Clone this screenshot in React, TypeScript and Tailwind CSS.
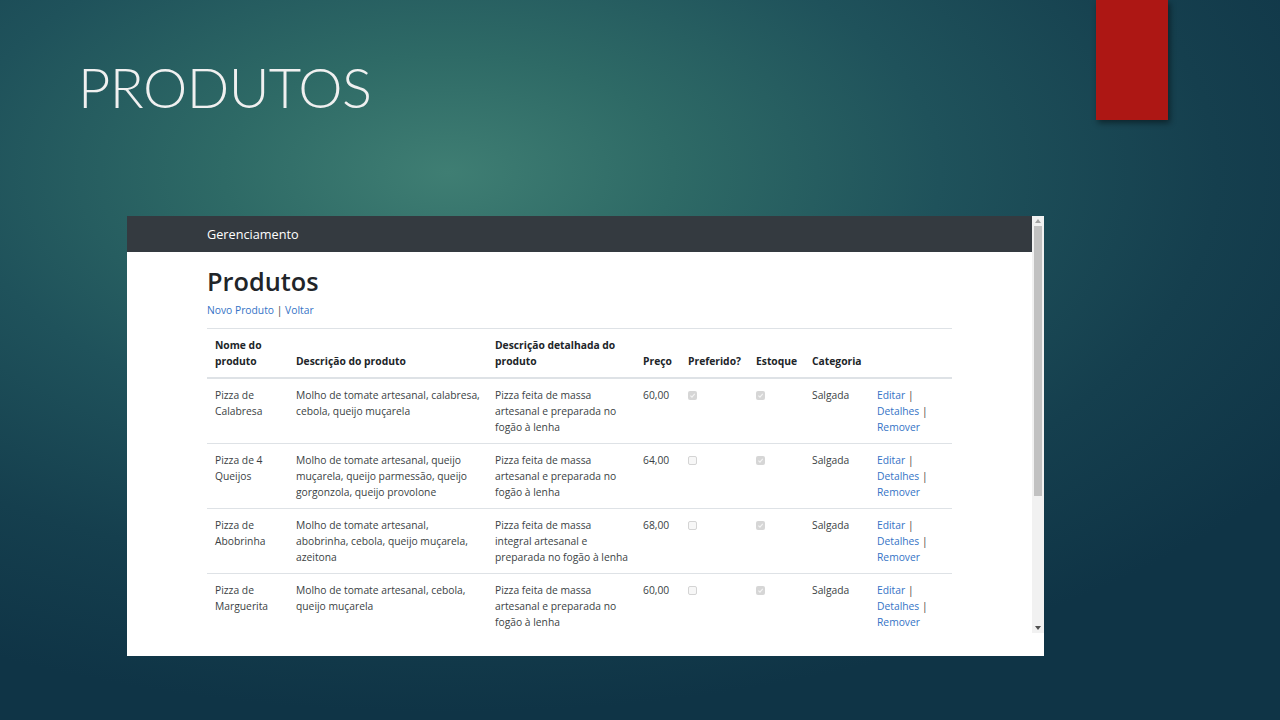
import React from "react";

const rows = [
  {
    nome: ["Pizza de", "Calabresa"],
    desc: ["Molho de tomate artesanal, calabresa,", "cebola, queijo muçarela"],
    det: ["Pizza feita de massa", "artesanal e preparada no", "fogão à lenha"],
    preco: "60,00",
    pref: true,
  },
  {
    nome: ["Pizza de 4", "Queijos"],
    desc: ["Molho de tomate artesanal, queijo", "muçarela, queijo parmessão, queijo", "gorgonzola, queijo provolone"],
    det: ["Pizza feita de massa", "artesanal e preparada no", "fogão à lenha"],
    preco: "64,00",
    pref: false,
  },
  {
    nome: ["Pizza de", "Abobrinha"],
    desc: ["Molho de tomate artesanal,", "abobrinha, cebola, queijo muçarela,", "azeitona"],
    det: ["Pizza feita de massa", "integral artesanal e", "preparada no fogão à lenha"],
    preco: "68,00",
    pref: false,
  },
  {
    nome: ["Pizza de", "Marguerita"],
    desc: ["Molho de tomate artesanal, cebola,", "queijo muçarela"],
    det: ["Pizza feita de massa", "artesanal e preparada no", "fogão à lenha"],
    preco: "60,00",
    pref: false,
  },
];

function Box({ checked }: { checked: boolean }) {
  return checked ? (
    <span className="inline-flex w-[9px] h-[9px] rounded-[2px] bg-[#d6d6d6] items-center justify-center mt-[4px]">
      <svg width="7" height="7" viewBox="0 0 10 10">
        <path d="M2 5.2 L4.2 7.3 L8.2 2.6" stroke="#f4f4f4" strokeWidth="1.6" fill="none" />
      </svg>
    </span>
  ) : (
    <span className="inline-block w-[9px] h-[9px] rounded-[2px] border border-[#d4d4d4] bg-[#f7f7f7] mt-[4px]" />
  );
}

function Lines({ items }: { items: string[] }) {
  return (
    <>
      {items.map((t, i) => (
        <div key={i} className="whitespace-nowrap">
          {t}
        </div>
      ))}
    </>
  );
}

export default function App() {
  return (
    <div className="relative w-[1280px] h-[720px] overflow-hidden bg-[radial-gradient(ellipse_80%_75%_at_35%_24%,#3f7e73_0%,#2e6a66_22%,#1f525b_48%,#153f4e_75%,#0f3446_100%)] flex flex-col">
      <div
        className="absolute left-[1096px] top-0 w-[72px] h-[120px] bg-[#ad1714] shadow-[2px_3px_6px_rgba(0,0,0,0.45)]"
      />
      <div className="pl-[78px] pt-[53px] h-[216px]">
        <h1
          className="text-[#f0f0f0] text-[56px] leading-[68px] tracking-[-0.6px]"
          style={{ fontFamily: '"Lato", "Open Sans", sans-serif', fontWeight: 300 }}
        >
          PRODUTOS
        </h1>
      </div>
      <div
        className="ml-[127px] w-[917px] h-[440px] bg-white flex text-[#212529]"
        style={{ fontFamily: '"Open Sans", "Noto Sans", sans-serif' }}
      >
        <div className="flex-1 flex flex-col">
          <div className="h-[36px] bg-[#343a40] flex items-center pl-[80px]">
            <span className="text-white text-[12.7px] pt-[1px]">Gerenciamento</span>
          </div>
          <div className="pl-[80px] pt-[14px]">
            <div className="text-[25.3px] leading-[31px] font-semibold text-[#212529]">Produtos</div>
            <div className="text-[10.3px] leading-[16px] mt-[5px]">
              <span className="text-[#3573c6]">Novo Produto</span>
              <span className="text-[#444]"> | </span>
              <span className="text-[#3573c6]">Voltar</span>
            </div>
            <table className="mt-[10px] w-[745px] table-fixed border-collapse text-[10.3px] leading-[16px]">
              <colgroup>
                <col className="w-[81px]" />
                <col className="w-[199px]" />
                <col className="w-[148px]" />
                <col className="w-[45px]" />
                <col className="w-[68px]" />
                <col className="w-[56px]" />
                <col className="w-[65px]" />
                <col className="w-[83px]" />
              </colgroup>
              <thead>
                <tr className="border-t border-[#dee2e6] border-b-2">
                  <th className="text-left align-bottom px-[8px] pt-[8px] pb-[8px] font-bold">
                    <Lines items={["Nome do", "produto"]} />
                  </th>
                  <th className="text-left align-bottom px-[8px] pt-[8px] pb-[8px] font-bold whitespace-nowrap">Descrição do produto</th>
                  <th className="text-left align-bottom px-[8px] pt-[8px] pb-[8px] font-bold">
                    <Lines items={["Descrição detalhada do", "produto"]} />
                  </th>
                  <th className="text-left align-bottom px-[8px] pt-[8px] pb-[8px] font-bold">Preço</th>
                  <th className="text-left align-bottom px-[8px] pt-[8px] pb-[8px] font-bold whitespace-nowrap">Preferido?</th>
                  <th className="text-left align-bottom px-[8px] pt-[8px] pb-[8px] font-bold">Estoque</th>
                  <th className="text-left align-bottom px-[8px] pt-[8px] pb-[8px] font-bold">Categoria</th>
                  <th className="px-[8px] py-[8px]"></th>
                </tr>
              </thead>
              <tbody>
                {rows.map((r, i) => (
                  <tr key={i} className={i < rows.length - 1 ? "border-b border-[#dee2e6]" : ""}>
                    <td className="align-top px-[8px] py-[8px] text-[#3b3f44]">
                      <Lines items={r.nome} />
                    </td>
                    <td className="align-top px-[8px] py-[8px] text-[#3b3f44]">
                      <Lines items={r.desc} />
                    </td>
                    <td className="align-top px-[8px] py-[8px] text-[#3b3f44]">
                      <Lines items={r.det} />
                    </td>
                    <td className="align-top px-[8px] py-[8px] text-[#3b3f44]">{r.preco}</td>
                    <td className="align-top px-[8px] py-[8px]">
                      <Box checked={r.pref} />
                    </td>
                    <td className="align-top px-[8px] py-[8px]">
                      <Box checked={true} />
                    </td>
                    <td className="align-top px-[8px] py-[8px] text-[#3b3f44]">Salgada</td>
                    <td className="align-top px-[8px] py-[8px]">
                      <div>
                        <span className="text-[#3573c6]">Editar</span>
                        <span className="text-[#444]"> |</span>
                      </div>
                      <div>
                        <span className="text-[#3573c6]">Detalhes</span>
                        <span className="text-[#444]"> |</span>
                      </div>
                      <div className="text-[#3573c6]">Remover</div>
                    </td>
                  </tr>
                ))}
              </tbody>
            </table>
          </div>
        </div>
        <div className="w-[12px] flex flex-col">
          <div className="h-[417px] bg-[#f1f1f1] flex flex-col items-center">
            <div className="h-[10px] flex items-center justify-center">
              <svg width="6" height="4" viewBox="0 0 6 4">
                <path d="M0 4 L3 0 L6 4 Z" fill="#a3a3a3" />
              </svg>
            </div>
            <div className="w-[8px] h-[270px] bg-[#c1c1c1]" />
            <div className="flex-1" />
            <div className="h-[10px] flex items-center justify-center">
              <svg width="6" height="4" viewBox="0 0 6 4">
                <path d="M0 0 L3 4 L6 0 Z" fill="#505050" />
              </svg>
            </div>
          </div>
          <div className="flex-1 bg-white" />
        </div>
      </div>
    </div>
  );
}
